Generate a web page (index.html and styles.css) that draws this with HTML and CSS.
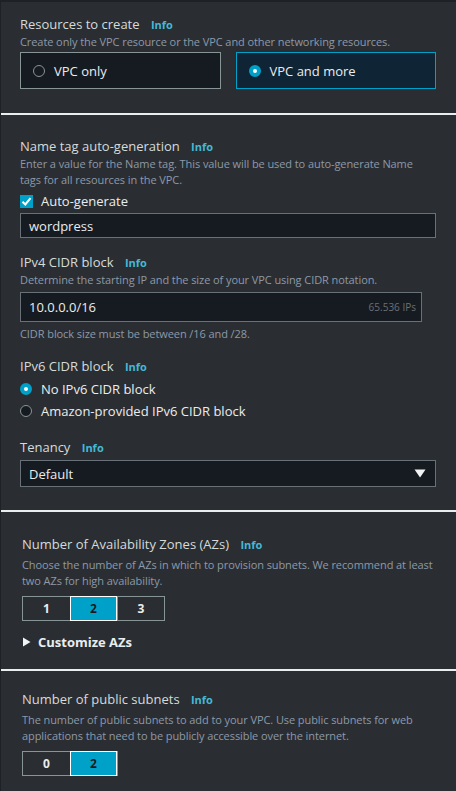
FILE: index.html
```html
<!DOCTYPE html>
<html>
<head>
<meta charset="utf-8">
<link rel="stylesheet" href="styles.css">
</head>
<body>
<div class="page">
  <section class="sec sec1">
    <div class="label">Resources to create <span class="info">Info</span></div>
    <div class="desc">Create only the VPC resource or the VPC and other networking resources.</div>
    <div class="tiles">
      <div class="tile"><span class="radio"></span>VPC only</div>
      <div class="tile sel"><span class="radio on"></span>VPC and more</div>
    </div>
  </section>
  <hr class="sep">
  <section class="sec sec2">
    <div class="label">Name tag auto-generation <span class="info">Info</span></div>
    <div class="desc">Enter a value for the Name tag. This value will be used to auto-generate Name tags for all resources in the VPC.</div>
    <div class="check"><span class="box"><svg width="11" height="11" viewBox="0 0 11 11"><path d="M1.5 5.8 L4.3 8.5 L9.5 2.2" fill="none" stroke="#fff" stroke-width="2"/></svg></span>Auto-generate</div>
    <div class="input wide">wordpress</div>

    <div class="label mt">IPv4 CIDR block <span class="info">Info</span></div>
    <div class="desc">Determine the starting IP and the size of your VPC using CIDR notation.</div>
    <div class="input cidr"><span>10.0.0.0/16</span><span class="ips">65.536 IPs</span></div>
    <div class="desc help">CIDR block size must be between /16 and /28.</div>

    <div class="label mt2">IPv6 CIDR block <span class="info">Info</span></div>
    <div class="opt"><span class="radio on"></span>No IPv6 CIDR block</div>
    <div class="opt"><span class="radio"></span>Amazon-provided IPv6 CIDR block</div>

    <div class="label mt3">Tenancy <span class="info">Info</span></div>
    <div class="input wide select"><span>Default</span><svg width="12" height="9" viewBox="0 0 12 9"><path d="M0.5 0.5 L11.5 0.5 L6 8.5 Z" fill="#f2f3f3"/></svg></div>
  </section>
  <hr class="sep">
  <section class="sec sec3">
    <div class="label">Number of Availability Zones (AZs) <span class="info">Info</span></div>
    <div class="desc lower">Choose the number of AZs in which to provision subnets. We recommend at least two AZs for high availability.</div>
    <div class="seg"><span>1</span><span class="on">2</span><span>3</span></div>
    <div class="expand"><svg width="9" height="10" viewBox="0 0 9 10"><path d="M1 0.5 L8.5 5 L1 9.5 Z" fill="#f2f3f3"/></svg>Customize AZs</div>
  </section>
  <hr class="sep">
  <section class="sec sec4">
    <div class="label">Number of public subnets <span class="info">Info</span></div>
    <div class="desc lower">The number of public subnets to add to your VPC. Use public subnets for web applications that need to be publicly accessible over the internet.</div>
    <div class="seg"><span>0</span><span class="on">2</span></div>
  </section>
</div>
</body>
</html>
```

FILE: styles.css
```css
html, body {
  margin: 0;
  padding: 0;
  background: #2a2e33;
}
body {
  font-family: "Open Sans", "Noto Sans", sans-serif;
  color: #d5dbdb;
}
.page {
  width: 456px;
  height: 791px;
  overflow: hidden;
  border-top: 2px solid #1e2227;
  border-left: 1px solid #1e2227;
  box-sizing: border-box;
}
.sec {
  padding: 0 20px 0 19px;
}
.sec1 { padding-top: 13px; height: 111px; box-sizing: border-box; }
.sec2 { padding-top: 22px; height: 395px; box-sizing: border-box; }
.sec3 { padding: 23px 19px 0 21px; height: 157px; box-sizing: border-box; }
.sec4 { padding: 19px 19px 0 21px; }
.sep {
  margin: 0;
  border: 0;
  height: 2px;
  background: #eaeded;
}
.label {
  font-size: 13px;
  line-height: 18px;
  color: #d5dbdb;
}
.info {
  color: #44b9d6;
  font-weight: 700;
  font-size: 11px;
  margin-left: 8px;
}
.desc {
  font-size: 11px;
  line-height: 16px;
  color: #8d99a8;
  letter-spacing: -0.08px;
}
.desc.lower { margin-top: 3px; }
.tiles {
  display: flex;
  gap: 15px;
  margin-top: 2px;
}
.tile {
  flex: 1;
  height: 37px;
  box-sizing: border-box;
  border: 1px solid #879596;
  background: #161b22;
  display: flex;
  align-items: center;
  padding-left: 12px;
  font-size: 13px;
  color: #eaeded;
}
.tile.sel {
  border-color: #00a1c9;
  background: #0f2435;
}
.radio {
  width: 12px;
  height: 12px;
  border-radius: 50%;
  border: 1px solid #879596;
  background: #161b22;
  display: inline-block;
  margin-right: 9px;
  box-sizing: border-box;
}
.radio.on {
  border: 4px solid #00a1c9;
  background: #fff;
}
.check {
  display: flex;
  align-items: center;
  font-size: 13px;
  color: #eaeded;
  margin-top: 4px;
  height: 18px;
}
.box {
  width: 13px;
  height: 13px;
  background: #00a1c9;
  display: inline-flex;
  align-items: center;
  justify-content: center;
  margin-right: 8px;
}
.input {
  box-sizing: border-box;
  border: 1px solid #687078;
  background: #161b22;
  font-size: 13px;
  color: #eaeded;
  display: flex;
  align-items: center;
  padding: 0 8px;
}
.input.wide {
  height: 25px;
  margin-top: 3px;
}
.input.cidr {
  width: 402px;
  height: 30px;
  margin-top: 4px;
  justify-content: space-between;
}
.ips {
  font-size: 10px;
  color: #687078;
  margin-right: -3px;
}
.help { margin-top: 4px; }
.mt { margin-top: 15px; }
.mt2 { margin-top: 15px; }
.mt3 { margin-top: 18px; }
.opt {
  display: flex;
  align-items: center;
  font-size: 13px;
  color: #eaeded;
  height: 18px;
  margin-top: 4px;
}
.opt + .opt { margin-top: 4px; }
.select {
  justify-content: space-between;
  margin-top: 5px;
  height: 27px !important;
  padding-right: 9px !important;
}
.seg {
  display: inline-flex;
  margin-top: 7px;
  border: 1px solid #879596;
  height: 25px;
  box-sizing: border-box;
}
.seg span {
  width: 47px;
  display: flex;
  align-items: center;
  justify-content: center;
  font-size: 12px;
  font-weight: 700;
  color: #eaeded;
  box-sizing: border-box;
}
.seg span + span {
  border-left: 1px solid #879596;
}
.seg span.on {
  background: #00a1c9;
  color: #16191f;
  border: 1px solid #fff;
  margin: -1px 0;
  height: 25px;
}
.expand {
  display: flex;
  align-items: center;
  font-size: 13px;
  font-weight: 700;
  color: #eaeded;
  margin-top: 12px;
}
.expand svg { margin-right: 7px; }
```
